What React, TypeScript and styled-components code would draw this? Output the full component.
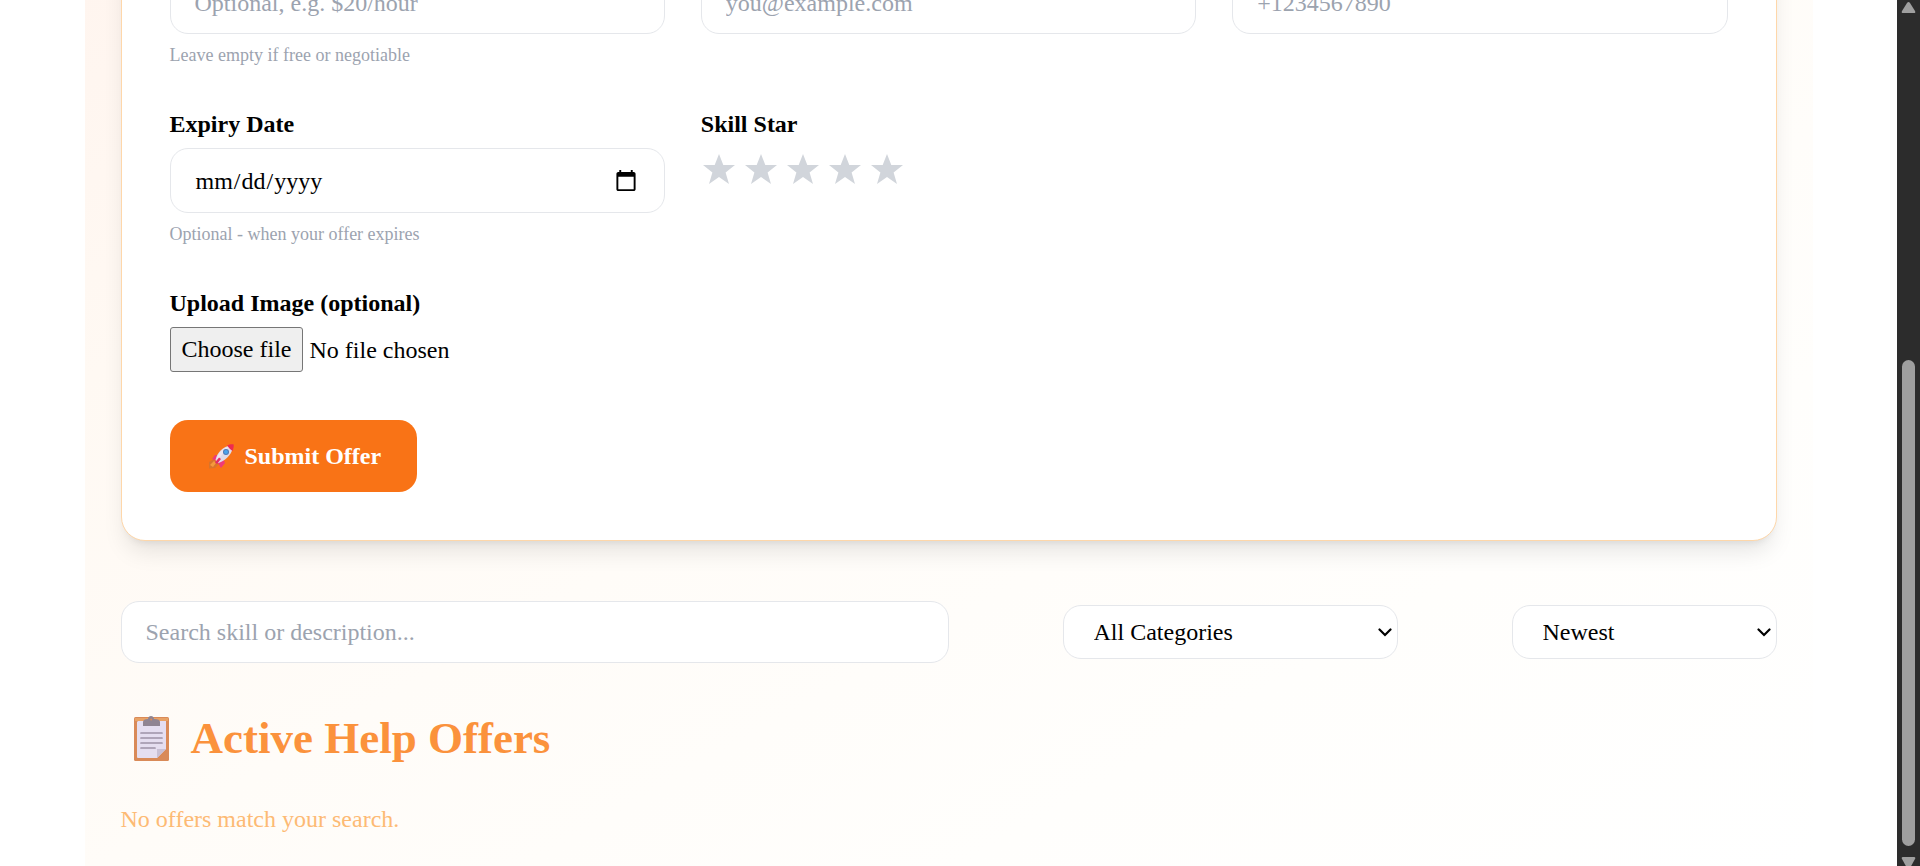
import React, { useState } from 'react';
import styled, { createGlobalStyle } from 'styled-components';

const GlobalStyle = createGlobalStyle`
  *, *::before, *::after { box-sizing: border-box; }
  body {
    margin: 0;
    background: #fff;
    color: #000;
    font: 24px/36px "Liberation Serif", "Times New Roman", serif;
  }
  button, input, select { font: inherit; color: inherit; }
`;

const Viewport = styled.div`
  display: flex;
  height: 100vh;
  overflow: hidden;
`;

const Page = styled.div`
  flex: 1;
  min-width: 0;
  overflow: hidden;
`;

const Section = styled.main`
  max-width: 1728px;
  margin: -113px auto 0;
  padding: 36px;
  background: linear-gradient(to bottom right, #fff4ee, #fff9f3 25%, #fffcf8 50%, #fffefc 75%, #fff);
`;

const OfferForm = styled.form`
  display: grid;
  grid-template-columns: repeat(3, 1fr);
  column-gap: 36px;
  padding: 48px;
  background: #fff;
  border: 1px solid #fed7aa;
  border-radius: 24px;
  box-shadow: 0 15px 23px -5px rgba(0, 0, 0, 0.1), 0 6px 9px -6px rgba(0, 0, 0, 0.1);
`;

const Field = styled.div<{ $wide?: boolean }>`
  display: flex;
  flex-direction: column;
  align-items: stretch;
  margin-bottom: 36px;
  ${(p) => p.$wide && 'grid-column: 1 / -1;'}
`;

const Label = styled.label`
  margin-bottom: 6px;
  font-weight: 700;
`;

const TextInput = styled.input<{ $width?: string; $tall?: boolean }>`
  width: ${(p) => p.$width ?? '100%'};
  height: ${(p) => (p.$tall ? 65 : 62)}px;
  padding: 0 24px;
  background: #fff;
  border: 1px solid #e5e7eb;
  border-radius: 18px;
  &::placeholder { color: #9ca3af; opacity: 1; }
`;

const Hint = styled.small`
  margin-top: 6px;
  font-size: 18px;
  line-height: 30px;
  color: #9ca3af;
`;

const Stars = styled.div`
  display: flex;
  gap: 6px;
`;

const StarButton = styled.button<{ $on: boolean }>`
  display: flex;
  width: 36px;
  padding: 6px 2px;
  background: none;
  border: 0;
  cursor: pointer;
  color: ${(p) => (p.$on ? '#facc15' : '#d1d5db')};
`;

const FilePicker = styled.label`
  display: flex;
  align-items: center;
  gap: 6px;
  cursor: pointer;
`;

const HiddenFile = styled.input`
  position: absolute;
  width: 1px;
  height: 1px;
  opacity: 0;
`;

const FileButton = styled.span`
  padding: 3px 11px;
  background: #efefef;
  border: 1px solid #767676;
  border-radius: 3px;
  line-height: 37px;
`;

const SubmitButton = styled.button`
  display: flex;
  align-items: center;
  justify-self: start;
  gap: 11px;
  height: 72px;
  margin-top: 12px;
  padding: 0 36px 0 39px;
  background: #f97316;
  border: 0;
  border-radius: 18px;
  color: #fff;
  font-weight: 700;
  cursor: pointer;
`;

const Filters = styled.div`
  display: flex;
  align-items: center;
  justify-content: space-between;
  margin-top: 60px;
`;

const SelectBox = styled.div<{ $width: number }>`
  position: relative;
  width: ${(p) => p.$width}px;

  svg {
    position: absolute;
    top: 23px;
    right: 6px;
    pointer-events: none;
  }
`;

const Select = styled.select`
  display: block;
  width: 100%;
  height: 54px;
  padding: 0 30px;
  appearance: none;
  background: #fff;
  border: 1px solid #e5e7eb;
  border-radius: 18px;
`;

const Title = styled.h2`
  display: flex;
  align-items: center;
  gap: 22px;
  margin: 42px 0 0;
  padding-left: 13px;
  font-size: 45px;
  line-height: 66px;
  color: #fb923c;
`;

const Empty = styled.p`
  margin: 30px 0 0;
  color: #fdba74;
`;

const ScrollTrack = styled.div`
  display: flex;
  flex-direction: column;
  align-items: center;
  width: 23px;
  margin-bottom: -4px;
  background: #2c2c2c;
`;

const ScrollThumb = styled.div`
  flex: 1;
  width: 13px;
  margin: 347px 0 11px;
  background: #9f9f9f;
  border-radius: 7px;
`;

const StarIcon = () => (
  <svg width="32" height="30" viewBox="0 0 32 30" aria-hidden="true">
    <path fill="currentColor" d="M16 0l4.300 11H32l-9.400 7.500L26 30l-10-7-10 7 3.400-11.500L0 11h11.700z" />
  </svg>
);

const RocketIcon = () => (
  <svg width="25" height="25" viewBox="0 0 25 25" aria-hidden="true">
    <path fill="#d9742b" d="M0 18l5-3 5 5-4 4-6 .5z" />
    <path fill="#f59a3c" d="M1 21l4-4 2 2-3 4z" />
    <path fill="#ef3b77" d="M3 15l3-4 5 .5L8 17zM14 14l2 5-4 5-3-5z" />
    <path fill="#e0dbe9" d="M6.500 16C8 9 14 2 22 1.500 24 1 24 3 23.500 5 22 11 16 17 9.500 19z" />
    <path fill="#f0e6f0" d="M8 14C10 8 15 3.500 20 2.500L9 15.500z" />
    <path fill="#ee2b4f" d="M18 1.500C20 .3 23 0 24.500.3 25 2 24.500 5 23.500 7 22 6 19.500 3.500 18 1.500z" />
    <path fill="#e52b68" d="M6 18.500l4-5 2 1.500-4 5z" />
    <circle cx="17" cy="8" r="3" fill="#4f78b5" />
    <circle cx="17" cy="8" r="2" fill="#4ba4ed" />
  </svg>
);

const ClipboardIcon = () => (
  <svg width="35" height="45" viewBox="0 0 35 45" aria-hidden="true">
    <rect y="1" width="35" height="44" rx="1.500" fill="#d98a58" />
    <path d="M1 2h33v3H1z" fill="#e8a266" />
    <path d="M4 5h28v28l-9 9H4a1 1 0 0 1-1-1V6z" fill="#e5def0" />
    <path d="M23 42v-9h9z" fill="#c9c0d5" />
    <path d="M9 10V6c0-2 2-3 5-3 0-4 6-4 6 0 4 0 6 1 6 3v4z" fill="#8f8492" />
    <circle cx="17.200" cy="3.500" r="1" fill="#d98a58" />
    <path d="M7 17h21M7 22h21M7 27h21M7 32h14" stroke="#9d92a7" strokeWidth="1.700" strokeLinecap="round" />
  </svg>
);

const ChevronIcon = () => (
  <svg width="14" height="9" viewBox="0 0 14 9" aria-hidden="true">
    <path d="M1.500 1.500L7 7l5.500-5.500" fill="none" stroke="#000" strokeWidth="2.200" strokeLinecap="round" />
  </svg>
);

const ArrowIcon = ({ down }: { down?: boolean }) => (
  <svg width="15" height="13" viewBox="0 0 15 13" aria-hidden="true">
    <path
      fill="#9f9f9f"
      d={down ? 'M2 0h11q2 0 1 2l-5 9q-1.500 2-3 0L1 2Q0 0 2 0z' : 'M2 13h11q2 0 1-2L9 3Q7.500 1 6 3l-5 8q-1 2 1 2z'}
    />
  </svg>
);

export default function App() {
  const [rating, setRating] = useState(0);
  const [fileName, setFileName] = useState('');

  return (
    <Viewport>
      <GlobalStyle />
      <Page>
        <Section>
          <OfferForm onSubmit={(e) => e.preventDefault()}>
            <Field>
              <TextInput aria-label="Price" placeholder="Optional, e.g. $20/hour" />
              <Hint>Leave empty if free or negotiable</Hint>
            </Field>
            <Field>
              <TextInput type="email" aria-label="Email" placeholder="you@example.com" />
            </Field>
            <Field>
              <TextInput type="tel" aria-label="Phone" placeholder="+1234567890" />
            </Field>
            <Field>
              <Label htmlFor="expiry">Expiry Date</Label>
              <TextInput id="expiry" type="date" $tall />
              <Hint>Optional - when your offer expires</Hint>
            </Field>
            <Field>
              <Label as="span" id="skill-star">Skill Star</Label>
              <Stars role="group" aria-labelledby="skill-star">
                {[1, 2, 3, 4, 5].map((n) => (
                  <StarButton
                    key={n}
                    type="button"
                    $on={n <= rating}
                    aria-label={`${n} of 5`}
                    onClick={() => setRating(n)}
                  >
                    <StarIcon />
                  </StarButton>
                ))}
              </Stars>
            </Field>
            <Field $wide>
              <Label htmlFor="image">Upload Image (optional)</Label>
              <FilePicker>
                <HiddenFile
                  id="image"
                  type="file"
                  accept="image/*"
                  onChange={(e) => setFileName(e.target.files?.[0]?.name ?? '')}
                />
                <FileButton>Choose file</FileButton>
                <span>{fileName || 'No file chosen'}</span>
              </FilePicker>
            </Field>
            <SubmitButton type="submit">
              <RocketIcon />
              Submit Offer
            </SubmitButton>
          </OfferForm>

          <Filters>
            <TextInput $width="50%" type="search" aria-label="Search" placeholder="Search skill or description..." />
            <SelectBox $width={335}>
              <Select aria-label="Category">
                <option>All Categories</option>
              </Select>
              <ChevronIcon />
            </SelectBox>
            <SelectBox $width={265}>
              <Select aria-label="Sort">
                <option>Newest</option>
              </Select>
              <ChevronIcon />
            </SelectBox>
          </Filters>

          <Title>
            <ClipboardIcon />
            Active Help Offers
          </Title>
          <Empty>No offers match your search.</Empty>
        </Section>
      </Page>
      <ScrollTrack aria-hidden="true">
        <ArrowIcon />
        <ScrollThumb />
        <ArrowIcon down />
      </ScrollTrack>
    </Viewport>
  );
}
